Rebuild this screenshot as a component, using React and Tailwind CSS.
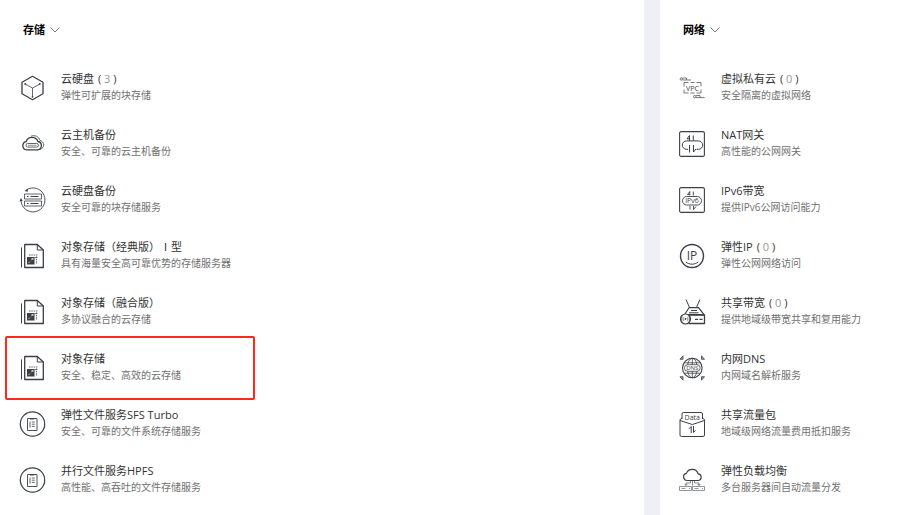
import React from "react";

const ink = "#3c3f44";

function Icon({ children }) {
  return (
    <svg
      className="h-[26px] w-[26px] shrink-0 overflow-visible"
      viewBox="0 0 26 26"
      fill="none"
      stroke={ink}
      strokeWidth="1"
      strokeLinejoin="round"
      aria-hidden="true"
    >
      {children}
    </svg>
  );
}

function IconText({ x, y, size, children }) {
  return (
    <text
      x={x}
      y={y}
      fontSize={size}
      textAnchor="middle"
      fontFamily="Open Sans, sans-serif"
      fill={ink}
      stroke="none"
    >
      {children}
    </text>
  );
}

function DiskIcon() {
  return (
    <Icon>
      <path d="M13.5 1.3 24 7.2v11.6L13.5 24.7 3 18.8V7.2z" strokeWidth="1.3" />
      <path d="M13.5 13v9M13.5 13 6.2 9M13.5 13l7.3-4" strokeWidth="0.8" />
      <g fill={ink} stroke="none">
        <circle cx="13.5" cy="21.8" r="0.9" />
        <circle cx="6.2" cy="9" r="0.9" />
        <circle cx="20.8" cy="9" r="0.9" />
      </g>
    </Icon>
  );
}

function CloudBackupIcon() {
  return (
    <Icon>
      <path
        d="M7.6 18.8a4.1 4.1 0 0 1-.5-8.1 6.2 6.2 0 0 1 11.8-.2 4.2 4.2 0 0 1-.2 8.3z"
        strokeWidth="1.3"
      />
      <path d="M12 5.2c3.5-1.5 8 .2 9 4.3 4.8 1.2 5.4 7.8-.8 9.2" strokeWidth="0.8" />
      <rect x="7" y="12.5" width="12.5" height="3.6" rx="1.8" strokeWidth="0.8" />
      <path d="M9 14.3h8.5" strokeWidth="0.6" />
    </Icon>
  );
}

function DiskBackupIcon() {
  return (
    <Icon>
      <path d="M7.5 2.8a12 12 0 1 1-5.5 11" strokeWidth="0.9" />
      <path d="m5.5 3.9 3.3-2.2v3zM.5 14.3l1.4-3.2 1.9 2.9z" fill={ink} stroke="none" />
      <rect x="5.5" y="7" width="17" height="5" strokeWidth="0.8" />
      <rect x="5.5" y="14" width="17" height="5" strokeWidth="0.8" />
      <path d="M8 9.5h1.5M11.5 9.5h8M8 16.5h1.5M11.5 16.5h8" />
    </Icon>
  );
}

function ObjectStorageIcon() {
  return (
    <Icon>
      <path d="M2.5 4.5v20" />
      <path d="M5.7 1.5h12.6l6 5.5v17.5H5.7z" strokeWidth="1.3" />
      <path d="M18.3 1.5V7h6" />
      <rect x="8" y="14" width="7.5" height="7.5" fill={ink} stroke="none" />
      <path
        d="M10 12h8.5M17.5 13.5v7.5M15.5 14.5h3"
        strokeWidth="0.8"
        strokeDasharray="1.5 0.8"
      />
      <path d="m9.5 20 1.3-1.3M12.2 17.3l1.6-1.6M12.5 15.5H14V17" stroke="#fff" strokeWidth="0.7" />
    </Icon>
  );
}

function FileServiceIcon() {
  return (
    <Icon>
      <circle cx="13.5" cy="13" r="12.2" strokeWidth="1.2" />
      <rect x="8.5" y="7.5" width="9.5" height="12" strokeWidth="0.9" />
      <path d="M11 7.8h4.5" strokeWidth="1.3" />
      <path d="M11 10.5v6M12.8 11h3M12.8 13.2h3M12.8 15.4h3" strokeWidth="0.8" />
    </Icon>
  );
}

function VpcIcon() {
  return (
    <Icon>
      <g strokeWidth="0.7">
        <circle cx="2.3" cy="4" r="1.2" />
        <path d="M3.5 3h4v2h-4M7.5 5H12" />
        <circle cx="15.7" cy="21.6" r="1.2" />
        <path d="M17 20.6h4v2h-4M21 22.6h4.7" />
        <path d="M5 11.5v-4h4.5M11.5 7.5h4M17.5 7.5H22v4M22 14.5V18h-4.5M15.5 18h-4M9.5 18H5v-3.5" />
      </g>
      <IconText x="13.5" y="15.5" size="7">VPC</IconText>
    </Icon>
  );
}

function NatIcon() {
  return (
    <Icon>
      <rect x="0.6" y="0.6" width="24.8" height="24.8" rx="1.5" strokeWidth="1.1" />
      <path d="M9 18.3H7.5a4.2 4.2 0 0 1 0-8.4h12a4.2 4.2 0 0 1 0 8.4h-2" />
      <path d="M10.5 10V4.5L8 7.8h2.5M14.3 4.5v5M10.5 14v7.5M14.5 14v7l2.5-3" />
    </Icon>
  );
}

function Ipv6Icon() {
  return (
    <Icon>
      <rect x="0.6" y="0.6" width="24.8" height="24.8" rx="1.5" strokeWidth="1.1" />
      <rect x="3.5" y="9.5" width="19" height="8.5" rx="4.2" strokeWidth="0.9" />
      <path d="M10.8 8.5v-4l-2.3 3h2M14.3 4.5v4M11 19v3.5M14.5 19v3.5l2.5-3" strokeWidth="0.9" />
      <IconText x="13" y="16.3" size="7">IPv6</IconText>
    </Icon>
  );
}

function EipIcon() {
  return (
    <Icon>
      <circle cx="13" cy="13" r="11.5" strokeWidth="1.4" />
      <path d="M6.8 19c3.6 2.9 8.8 2.9 12.4 0" />
      <IconText x="13" y="17" size="12">IP</IconText>
    </Icon>
  );
}

function RouterIcon() {
  return (
    <Icon>
      <path d="m7 .5 3.5 8M21 .5l-3.5 8" />
      <path d="M10 8.7h9.5l5.5 7H5.5z" strokeWidth="1.2" />
      <path d="M12 11.5h6M10 13.8h9.5" />
      <path d="M9.5 16h16v8.5h-16" strokeWidth="1.3" />
      <path d="M16 20.3h3M20.5 20.3h3" strokeWidth="1.2" />
      <circle cx="6.5" cy="20" r="5" fill="#fff" strokeWidth="1.2" />
      <circle cx="6.5" cy="20" r="0.9" fill={ink} stroke="none" />
      <path
        d="M4.7 18.3a2.5 2.5 0 0 0 0 3.4M8.3 18.3a2.5 2.5 0 0 1 0 3.4M3.2 17.5a4 4 0 0 0 0 5M9.8 17.5a4 4 0 0 1 0 5"
        strokeWidth="0.7"
      />
    </Icon>
  );
}

function DnsIcon() {
  return (
    <Icon>
      <circle cx="13.3" cy="13" r="9.8" strokeWidth="1.1" />
      <ellipse cx="13.3" cy="13" rx="5" ry="9.8" strokeWidth="0.8" />
      <path d="M13.3 3.2v19.6M5 7.8h16.6M5 18.2h16.6" strokeWidth="0.8" />
      <rect x="5.5" y="9.7" width="15.6" height="6.6" rx="3" fill="#fff" strokeWidth="0.8" />
      <IconText x="13.3" y="15.2" size="6">DNS</IconText>
      <path
        d="M1 4.3 4 .8v3.5zM25.5 4.3l-3-3.5v3.5zM1 21.7l3 3.5v-3.5zM25.5 21.7l-3 3.5v-3.5z"
        fill="#a8aaad"
        strokeWidth="0.8"
      />
    </Icon>
  );
}

function DataPackIcon() {
  return (
    <Icon>
      <path d="M3 8V3a1.5 1.5 0 0 1 1.5-1.5H22A1.5 1.5 0 0 1 23.500 3v5" />
      <path d="M3 7.3 1 8.500V24a1.500 1.500 0 0 0 1.500 1.500H24a1.500 1.500 0 0 0 1.500-1.500V8.500l-2-1.200" />
      <path d="m1 9.500 12.300 4 12.200-4" />
      <path d="M12.200 22v-6.500L10 17.800M14.500 15v6.500l2-2.200" />
      <IconText x="13.3" y="9.3" size="7">Data</IconText>
    </Icon>
  );
}

function LoadBalanceIcon() {
  return (
    <Icon>
      <path
        d="M8 13.5a3.600 3.600 0 0 1-.6-7.100 6.200 6.200 0 0 1 11.700.4 3.400 3.400 0 0 1 .4 6.700z"
        strokeWidth="1.2"
      />
      <path
        d="M11.5 14v2H7v2.5M15.5 14v2H20v2.5M13.5 14v4.5M5.7 17 7 18.5 8.3 17M18.7 17l1.3 1.5 1.3-1.5"
        strokeWidth="0.6"
      />
      <g stroke="#777a7f" strokeWidth="0.8">
        <rect x="0.5" y="19.5" width="12" height="4" />
        <rect x="13.5" y="19.5" width="12" height="4" />
        <path d="M2.5 21.5h4M10 21.5h1M15.5 21.5h4M23 21.5h1" />
      </g>
    </Icon>
  );
}

const storage = [
  { icon: DiskIcon, name: "云硬盘", count: 3, desc: "弹性可扩展的块存储" },
  { icon: CloudBackupIcon, name: "云主机备份", desc: "安全、可靠的云主机备份" },
  { icon: DiskBackupIcon, name: "云硬盘备份", desc: "安全可靠的块存储服务" },
  { icon: ObjectStorageIcon, name: "对象存储（经典版）Ⅰ型", desc: "具有海量安全高可靠优势的存储服务器" },
  { icon: ObjectStorageIcon, name: "对象存储（融合版）", desc: "多协议融合的云存储" },
  { icon: ObjectStorageIcon, name: "对象存储", desc: "安全、稳定、高效的云存储", marked: true },
  { icon: FileServiceIcon, name: "弹性文件服务SFS Turbo", desc: "安全、可靠的文件系统存储服务" },
  { icon: FileServiceIcon, name: "并行文件服务HPFS", desc: "高性能、高吞吐的文件存储服务" },
];

const network = [
  { icon: VpcIcon, name: "虚拟私有云", count: 0, desc: "安全隔离的虚拟网络" },
  { icon: NatIcon, name: "NAT网关", desc: "高性能的公网网关" },
  { icon: Ipv6Icon, name: "IPv6带宽", desc: "提供IPv6公网访问能力" },
  { icon: EipIcon, name: "弹性IP", count: 0, desc: "弹性公网网络访问" },
  { icon: RouterIcon, name: "共享带宽", count: 0, desc: "提供地域级带宽共享和复用能力" },
  { icon: DnsIcon, name: "内网DNS", desc: "内网域名解析服务" },
  { icon: DataPackIcon, name: "共享流量包", desc: "地域级网络流量费用抵扣服务" },
  { icon: LoadBalanceIcon, name: "弹性负载均衡", desc: "多台服务器间自动流量分发" },
];

function ServiceItem({ item }) {
  const ItemIcon = item.icon;
  return (
    <li className="relative">
      <a href="#" className="flex h-14 items-center gap-4">
        <ItemIcon />
        <span className="min-w-0 pb-0.5">
          <span className="block text-[11px] leading-4 text-[#333333]">
            {item.name}
            {item.count !== undefined && (
              <span className="ml-1">
                ( <span className="text-[#999999]">{item.count}</span> )
              </span>
            )}
          </span>
          <span className="block text-[10px] leading-4 text-[#707070]">{item.desc}</span>
        </span>
      </a>
      {/* Highlight box */}
      {item.marked && (
        <span className="pointer-events-none absolute -inset-y-1 -left-[14px] w-[250px] rounded-xs border-2 border-[#fb2a1c]" />
      )}
    </li>
  );
}

function ServicePanel({ title, items }) {
  return (
    <section className="bg-white px-[19px] pb-2">
      <h2 className="flex h-[60px] items-center pl-1">
        <button type="button" className="flex items-center gap-1 text-[11px] leading-4 font-bold text-black">
          {title}
          <svg className="h-3 w-3" viewBox="0 0 12 12" fill="none" stroke="#777b86" aria-hidden="true">
            <path d="m1.500 3.500 4.500 4.500 4.500-4.500" />
          </svg>
        </button>
      </h2>
      <ul>
        {items.map((item) => (
          <ServiceItem key={item.name} item={item} />
        ))}
      </ul>
    </section>
  );
}

export default function App() {
  return (
    <main className="grid min-h-screen grid-cols-[161fr_64fr] gap-4 bg-[#eff0f5] font-['Open_Sans','Noto_Sans_CJK_SC',sans-serif]">
      <ServicePanel title="存储" items={storage} />
      <ServicePanel title="网络" items={network} />
    </main>
  );
}
